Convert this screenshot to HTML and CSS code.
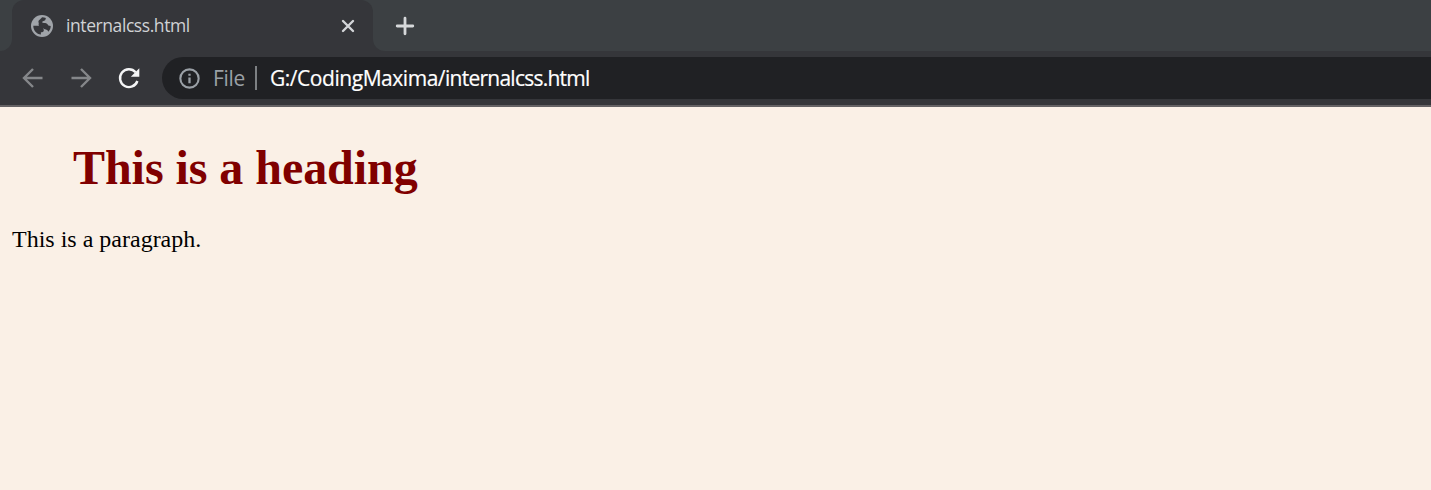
FILE: index.html
```html
<!DOCTYPE html>
<html lang="en">
<head>
<meta charset="utf-8">
<title>internalcss.html</title>
<link rel="stylesheet" href="styles.css">
</head>
<body>
<header class="browser">
  <div class="tabstrip">
    <div class="edge edge-left"></div>
    <div class="tab">
      <svg class="globe" viewBox="0 0 24 24"><circle cx="12" cy="12" r="12" fill="#a0a4a9"/><path fill="#35363a" d="M12 2.500c1.700 0 3 .300 4.200.900-.200 2.300-1 3.100-3.200 3.400-.800.200-1 1.200-.300 1.700 1.800.4 4.300-.2 5.300 1.700 1 1.600 2 1.800 3.500 1.800 0 2.600-1 4.700-2.600 6.200-.8-1.800-1.900-2.300-3.900-2.600-2.200-1.800-5.500-1.600-6.500-3.600-.7-1.500.5-2.600-.3-4C7.500 5.500 10.800 4.800 12 2.500zM2.500 11.800c3 .1 6-.5 8.300 1.400 1.500 1.300 3.200 1.400 3.200 3.300 0 1.700-1.200 2.200-3.200 2.300v2.600C6 21 2.500 17 2.500 11.800z"/></svg>
      <span class="tab-title">internalcss.html</span>
      <svg class="close" viewBox="0 0 14 14"><path d="M2 2l10 10M12 2L2 12" stroke="#d3d5d8" stroke-width="2.400" stroke-linecap="round"/></svg>
    </div>
    <div class="edge edge-right">
      <svg class="plus" viewBox="0 0 20 20"><path d="M10 2.200v15.600M2.200 10h15.600" stroke="#d6d8da" stroke-width="2.800" stroke-linecap="round"/></svg>
    </div>
  </div>
  <div class="toolbar">
    <svg class="nav" viewBox="0 0 24 24"><path d="M21.500 12H3M12 3L3 12l9 9" fill="none" stroke="#85878a" stroke-width="2.400"/></svg>
    <svg class="nav" viewBox="0 0 24 24"><path d="M2.500 12H21M12 3l9 9-9 9" fill="none" stroke="#85878a" stroke-width="2.400"/></svg>
    <svg class="nav" viewBox="0 0 24 24"><path d="M20.400 15A8.900 8.900 0 1 1 18.600 6.200" fill="none" stroke="#f4f5f6" stroke-width="2.400"/><path d="M22.300 2.200v8.500h-8.500z" fill="#f4f5f6"/></svg>
    <div class="address">
      <svg class="info" viewBox="0 0 22 22"><circle cx="11" cy="11" r="9.600" fill="none" stroke="#9aa0a6" stroke-width="2.200"/><path d="M11 10v6M11 6v2.200" stroke="#9aa0a6" stroke-width="2.400"/></svg>
      <span class="scheme">File</span>
      <span class="divider"></span>
      <span class="url"><span class="drive">G:/CodingMaxima/</span>internalcss.html</span>
    </div>
  </div>
</header>
<main class="page">
  <h1 class="heading">This is a heading</h1>
  <p class="paragraph">This is a paragraph.</p>
</main>
</body>
</html>
```
FILE: styles.css
```css
body {
  margin: 0;
  background: #faf0e6;
  overflow: hidden;
}

.browser {
  font-family: "Open Sans", "Noto Sans", sans-serif;
  background: #35363a;
  border-bottom: 2px solid #646264;
}

.tabstrip {
  display: flex;
  height: 51px;
  background: linear-gradient(#3c4043, #3c4043) 0 0 / 100% 26px no-repeat #35363a;
}

.edge {
  background: #3c4043;
}

.edge-left {
  width: 12px;
  border-bottom-right-radius: 12px;
}

.edge-right {
  display: flex;
  align-items: center;
  flex: 1;
  padding-left: 22px;
  border-bottom-left-radius: 12px;
}

.tab {
  display: flex;
  align-items: center;
  box-sizing: border-box;
  width: 361px;
  padding: 0 18px 0 19px;
  border-radius: 12px 12px 0 0;
  background: #35363a;
}

.globe {
  width: 22px;
  height: 22px;
}

.tab-title {
  margin: -1px 0 0 13px;
  font-size: 17.5px;
  line-height: 24px;
  letter-spacing: -0.42px;
  color: #d0d2d5;
  white-space: nowrap;
}

.close {
  width: 14px;
  height: 14px;
  margin-left: auto;
}

.plus {
  width: 20px;
  height: 20px;
}

.toolbar {
  display: flex;
  align-items: center;
  height: 54px;
  padding-left: 21px;
}

.nav {
  width: 24px;
  height: 24px;
  margin-right: 24px;
}

.address {
  display: flex;
  align-items: center;
  flex: 1;
  height: 42px;
  margin-left: -3px;
  padding-left: 17px;
  border-radius: 21px 0 0 21px;
  background: #202124;
  font-size: 21px;
  line-height: 30px;
  white-space: nowrap;
}

.info {
  width: 21px;
  height: 21px;
}

.scheme {
  width: 30px;
  margin-left: 13px;
  letter-spacing: -0.3px;
  color: #9aa0a6;
}

.divider {
  width: 2px;
  height: 24px;
  margin-left: 12px;
  background: #7d8083;
}

.url {
  margin-left: 13px;
  letter-spacing: -0.76px;
  color: #fff;
  -webkit-text-stroke: 0.2px #fff;
}

.drive {
  letter-spacing: -0.46px;
}

.page {
  padding: 0 12px;
  font-family: "Liberation Serif", "Times New Roman", serif;
}

.heading {
  margin: 33px 0 0 61px;
  font-size: 48px;
  line-height: 55px;
  letter-spacing: -0.05px;
  color: #800000;
}

.paragraph {
  margin: 31px 0 0;
  font-size: 24px;
  line-height: 27px;
  color: #000;
}
```
